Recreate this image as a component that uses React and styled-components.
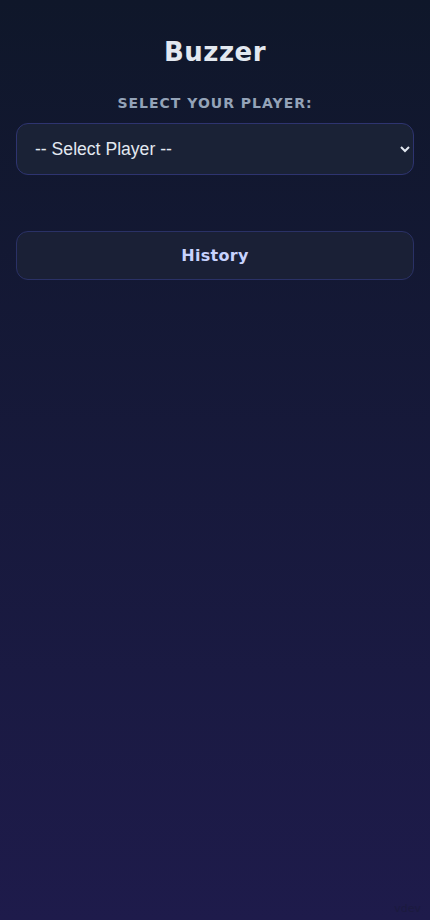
import React, { useState } from "react";
import styled, { createGlobalStyle } from "styled-components";

const GlobalStyle = createGlobalStyle`
  html, body {
    margin: 0;
    padding: 0;
  }
  body {
    font-family: "DejaVu Sans", sans-serif;
    background: #0f172a;
  }
`;

const Page = styled.div`
  min-height: 920px;
  box-sizing: border-box;
  padding: 37px 16px 16px;
  background: linear-gradient(180deg, #0f172a 0%, #1e1b4b 100%);
  color: #e2e8f0;
  display: flex;
  flex-direction: column;
  position: relative;
`;

const Title = styled.h1`
  margin: 0;
  text-align: center;
  font-size: 26px;
  font-weight: 700;
  letter-spacing: 0.5px;
  color: #e2e8f0;
`;

const Label = styled.label`
  display: block;
  margin-top: 28px;
  text-align: center;
  font-size: 14px;
  font-weight: 700;
  letter-spacing: 1px;
  text-transform: uppercase;
  color: #94a3b8;
`;

const PlayerSelect = styled.select`
  margin-top: 12px;
  width: 100%;
  height: 52px;
  padding: 0 6px 0 14px;
  border-radius: 12px;
  border: 1px solid #2e3470;
  background: #1a2236;
  color: #e2e8f0;
  font-family: "Liberation Sans", Arial, sans-serif;
  font-size: 17.6px;
  outline: none;
`;

const HistoryButton = styled.button`
  margin-top: 56px;
  width: 100%;
  height: 49px;
  border-radius: 12px;
  border: 1px solid #2a3166;
  background: #1a2036;
  color: #c7d2fe;
  font-family: "DejaVu Sans", sans-serif;
  font-size: 16px;
  font-weight: 700;
  letter-spacing: 0.3px;
  cursor: pointer;
`;

const Credit = styled.span`
  position: absolute;
  right: 9px;
  bottom: 5px;
  font-size: 11px;
  color: #1b1a3e;
`;

export default function App() {
  const [player, setPlayer] = useState("");

  return (
    <>
      <GlobalStyle />
      <Page>
        <Title>Buzzer</Title>
        <Label htmlFor="player">Select your player:</Label>
        <PlayerSelect
          id="player"
          value={player}
          onChange={(e) => setPlayer(e.target.value)}
        >
          <option value="">-- Select Player --</option>
        </PlayerSelect>
        <HistoryButton>History</HistoryButton>
        <Credit>vdev</Credit>
      </Page>
    </>
  );
}
